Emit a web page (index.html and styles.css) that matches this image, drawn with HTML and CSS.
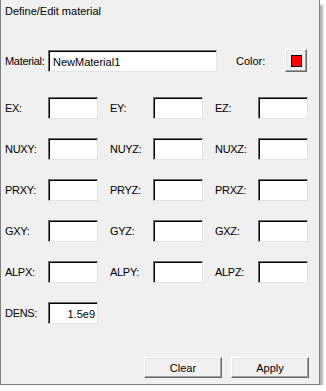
FILE: index.html
```html
<!DOCTYPE html>
<html lang="en">
<head>
    <meta charset="UTF-8">
    <title>Define/Edit material</title>
    <link rel="stylesheet" href="styles.css">
</head>
<body>
    <div class="window">
        <div class="title">Define/Edit material</div>

        <div class="material-row">
            <label class="label">Material:</label>
            <input class="field wide" type="text" value="NewMaterial1">
            <label class="color-label">Color:</label>
            <button class="btn color-btn"><span class="swatch"></span></button>
        </div>

        <div class="grid">
            <div class="cell"><label class="label">EX:</label><input class="field" type="text"></div>
            <div class="cell"><label class="label">EY:</label><input class="field" type="text"></div>
            <div class="cell"><label class="label">EZ:</label><input class="field" type="text"></div>
            <div class="cell"><label class="label">NUXY:</label><input class="field" type="text"></div>
            <div class="cell"><label class="label">NUYZ:</label><input class="field" type="text"></div>
            <div class="cell"><label class="label">NUXZ:</label><input class="field" type="text"></div>
            <div class="cell"><label class="label">PRXY:</label><input class="field" type="text"></div>
            <div class="cell"><label class="label">PRYZ:</label><input class="field" type="text"></div>
            <div class="cell"><label class="label">PRXZ:</label><input class="field" type="text"></div>
            <div class="cell"><label class="label">GXY:</label><input class="field" type="text"></div>
            <div class="cell"><label class="label">GYZ:</label><input class="field" type="text"></div>
            <div class="cell"><label class="label">GXZ:</label><input class="field" type="text"></div>
            <div class="cell"><label class="label">ALPX:</label><input class="field" type="text"></div>
            <div class="cell"><label class="label">ALPY:</label><input class="field" type="text"></div>
            <div class="cell"><label class="label">ALPZ:</label><input class="field" type="text"></div>
            <div class="cell"><label class="label">DENS:</label><input class="field num" type="text" value="1.5e9"></div>
        </div>

        <div class="actions">
            <button class="btn action">Clear</button>
            <button class="btn action">Apply</button>
        </div>
    </div>
</body>
</html>
```

FILE: styles.css
```css
* {
    box-sizing: border-box;
    margin: 0;
    padding: 0;
}

body {
    background-color: #fff;
    font-family: "Liberation Sans", Arial, sans-serif;
    font-size: 11px;
    color: #000;
}

.window {
    width: 320px;
    height: 385px;
    background-color: #f0f0f0;
    border-left: 1px solid #808080;
    border-right: 1px solid #808080;
    border-bottom: 1px solid #808080;
    padding: 0 10px 0 4px;
    box-shadow: 4px 4px 2px -1px rgba(0, 0, 0, 0.3);
}

.title {
    padding-top: 5px;
    line-height: 13px;
}

.material-row {
    display: flex;
    align-items: center;
    height: 23px;
    margin-top: 31px;
}

.label {
    width: 43px;
    flex-shrink: 0;
    white-space: nowrap;
    letter-spacing: -0.3px;
}

.field {
    width: 50px;
    height: 22px;
    border: 1px solid;
    border-color: #6d6d6d #e3e3e3 #e3e3e3 #6d6d6d;
    box-shadow: inset 1px 1px 0 #000;
    background-color: #fff;
    font-family: inherit;
    font-size: 11px;
    padding: 2px 2px 0 4px;
    outline: none;
}

.field.wide {
    width: 169px;
}

.field.num {
    text-align: right;
}

.color-label {
    margin-left: 19px;
    width: 49px;
}

.btn {
    background-color: #f0f0f0;
    border: 1px solid;
    border-color: #fff #696969 #696969 #fff;
    box-shadow: inset -1px -1px 0 #a0a0a0, inset 1px 1px 0 #e3e3e3;
    font-family: inherit;
    font-size: 11px;
    color: #000;
}

.color-btn {
    width: 22px;
    height: 23px;
    display: flex;
    align-items: center;
    justify-content: center;
}

.swatch {
    display: block;
    width: 11px;
    height: 12px;
    background-color: #f00;
    border: 1px solid #000;
}

.grid {
    display: grid;
    grid-template-columns: repeat(3, 93px);
    column-gap: 12px;
    row-gap: 19px;
    margin-top: 25px;
}

.cell {
    display: flex;
    align-items: center;
    height: 22px;
}

.actions {
    display: flex;
    justify-content: flex-end;
    gap: 9px;
    margin-top: 33px;
}

.action {
    width: 78px;
    height: 21px;
}
```
